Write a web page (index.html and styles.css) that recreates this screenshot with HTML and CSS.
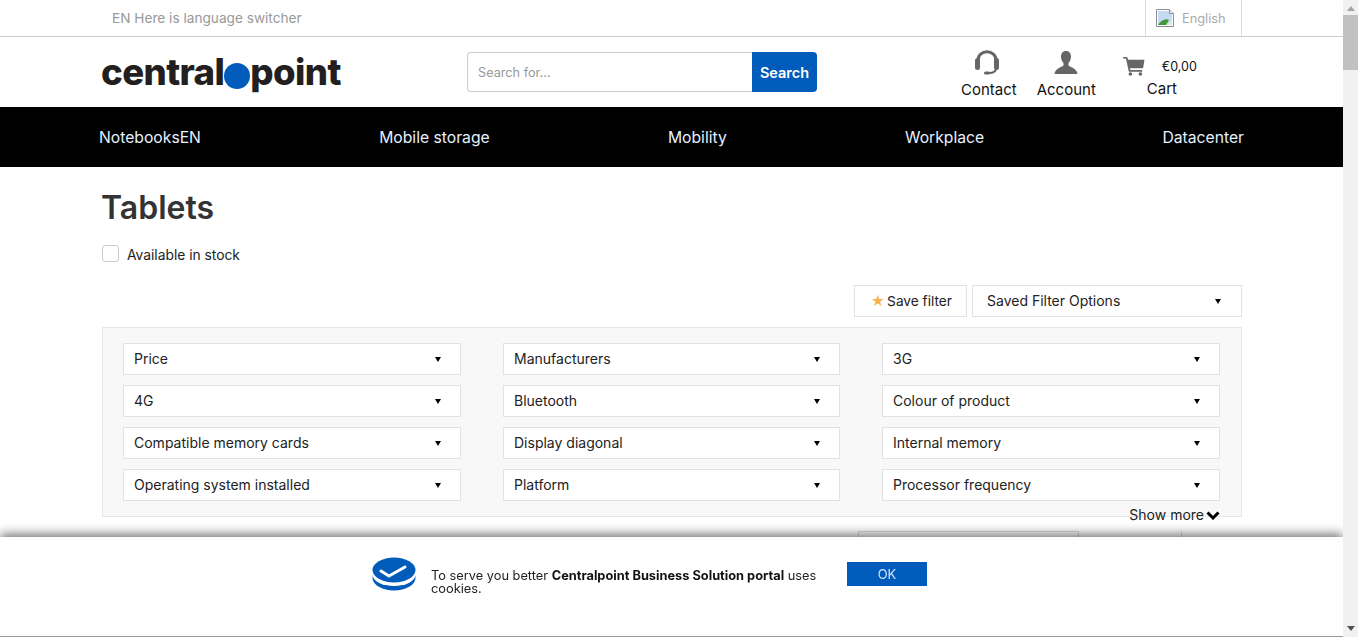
FILE: index.html
```html
<html>
<head>
<title>Tablets</title>
<link rel="stylesheet" href="styles.css">
</head>
<body>

<div class="page">
  <div class="topbar">
    <div class="wrap topbar-row">
      <span class="lang-note">EN Here is language switcher</span>
      <div class="lang-box">
        <svg class="broken" width="18" height="18" viewBox="0 0 18 18">
          <path d="M.5.5h13l4 4v13H.5z" fill="#fff" stroke="#8a8f96"/>
          <path d="M2 2h11v3h3v11H2z" fill="#c5d9f2"/>
          <path d="M2 16c3-5 8-7 11-5l-3 5z" fill="#3f9a3a"/>
          <path d="M11 16l3-4 2 1v3z" fill="#dce8d8"/>
          <path d="M13.5.5v4h4" fill="#eee" stroke="#8a8f96"/>
        </svg>
        <span>English</span>
      </div>
    </div>
  </div>

  <div class="wrap header">
    <div class="logo">central<i class="dot"></i>point</div>
    <div class="search">
      <input type="text" placeholder="Search for...">
      <button>Search</button>
    </div>
    <div class="tools">
      <div class="tool contact">
        <svg width="26" height="26" viewBox="0 0 26 26">
          <path d="M4 16V10C4 5 8 1.800 13 1.800S22 5 22 10V16" fill="none" stroke="#666" stroke-width="3"/>
          <rect x="1" y="8" width="5" height="12" rx="2.500" fill="#666"/>
          <rect x="20" y="8" width="5" height="12" rx="2.500" fill="#666"/>
          <path d="M22 18c0 4-3 5-7 5" fill="none" stroke="#666" stroke-width="2"/>
          <rect x="10" y="21.500" width="6" height="3" rx="1.500" fill="#666"/>
        </svg>
        <span>Contact</span>
      </div>
      <div class="tool account">
        <svg width="26" height="26" viewBox="0 0 26 26">
          <path d="M13 1c-3.500 0-5 2.700-5 5.500 0 2.500 1 5 2.500 6.500v2.500C8 17.500 2 18.500 1.500 24h23c-.5-5.500-6.500-6.500-9-8.500V13C17 11.500 18 9 18 6.500 18 3.700 16.500 1 13 1z" fill="#666"/>
        </svg>
        <span>Account</span>
      </div>
      <div class="tool cart">
        <div class="cart-top">
          <svg width="24" height="20" viewBox="0 0 24 22">
            <path d="M0 1h4.500l1 3H23.500l-1.500 9.500H7.500l.5 2H21v1.800H6.300L3.200 2.800H0z" fill="#666"/>
            <circle cx="8" cy="19.800" r="2" fill="#666"/>
            <circle cx="19" cy="19.800" r="2" fill="#666"/>
          </svg>
          <span class="price">€0,00</span>
        </div>
        <span class="cart-label">Cart</span>
      </div>
    </div>
  </div>

  <div class="nav">
    <div class="nav-row">
      <a>NotebooksEN</a>
      <a>Mobile storage</a>
      <a>Mobility</a>
      <a>Workplace</a>
      <a>Datacenter</a>
    </div>
  </div>

  <div class="wrap content">
    <h1>Tablets</h1>
    <label class="stock"><i class="check"></i>Available in stock</label>

    <div class="filter-actions">
      <div class="save-filter"><span class="star">★</span>Save filter</div>
      <div class="select saved">Saved Filter Options<i class="arrow"></i></div>
    </div>

    <div class="filters">
      <div class="select">Price<i class="arrow"></i></div>
      <div class="select">Manufacturers<i class="arrow"></i></div>
      <div class="select">3G<i class="arrow"></i></div>
      <div class="select">4G<i class="arrow"></i></div>
      <div class="select">Bluetooth<i class="arrow"></i></div>
      <div class="select">Colour of product<i class="arrow"></i></div>
      <div class="select">Compatible memory cards<i class="arrow"></i></div>
      <div class="select">Display diagonal<i class="arrow"></i></div>
      <div class="select">Internal memory<i class="arrow"></i></div>
      <div class="select">Operating system installed<i class="arrow"></i></div>
      <div class="select">Platform<i class="arrow"></i></div>
      <div class="select">Processor frequency<i class="arrow"></i></div>
      <div class="show-more">Show more
        <svg width="14" height="10" viewBox="0 0 14 10"><path d="M1.500 2.500L7 8l5.500-5.500" fill="none" stroke="#000" stroke-width="3"/></svg>
      </div>
    </div>

    <div class="sort-row">
      <div class="sort-a"></div>
      <div class="sort-b"></div>
    </div>
  </div>
</div>

<div class="cookie">
  <svg class="cookie-icon" width="44" height="34" viewBox="0 0 44 34">
    <ellipse cx="22" cy="21" rx="21.500" ry="12.500" fill="#005bbb"/>
    <ellipse cx="22" cy="17.500" rx="21.500" ry="11.500" fill="#fff"/>
    <ellipse cx="22" cy="13" rx="21.500" ry="12.500" fill="#005bbb"/>
    <path d="M9 14l8 5 16-9" fill="none" stroke="#fff" stroke-width="3" stroke-linecap="round" stroke-linejoin="round"/>
  </svg>
  <p>To serve you better <b>Centralpoint Business Solution portal</b> uses<br>cookies.</p>
  <button>OK</button>
</div>

<div class="scrollbar">
  <i class="up"></i>
  <div class="track"><div class="thumb"></div></div>
  <i class="down"></i>
</div>

</body>
</html>
```

FILE: styles.css
```css
html, body {
  margin: 0;
  height: 637px;
  overflow: hidden;
}

body {
  background: #fff;
  color: #222;
  font-family: Inter, "Liberation Sans", sans-serif;
  font-size: 14px;
}

.page {
  width: 1343px;
  height: 637px;
  overflow: hidden;
}

.wrap {
  width: 1140px;
  margin-left: 102px;
}

/* top bar */
.topbar {
  height: 36px;
  border-bottom: 1px solid #ccc;
}

.topbar-row {
  display: flex;
  justify-content: space-between;
  align-items: center;
  height: 36px;
}

.lang-note {
  margin: -1px 0 0 10px;
  color: #999;
  font-size: 13.65px;
}

.lang-box {
  display: flex;
  align-items: center;
  gap: 8px;
  width: 97px;
  height: 36px;
  padding-left: 10px;
  box-sizing: border-box;
  border: solid #ddd;
  border-width: 0 1px;
  color: #aaa;
  font-size: 12.8px;
}

/* header */
.header {
  display: flex;
  align-items: flex-start;
  height: 70px;
}

.logo {
  width: 365px;
  height: 70px;
  margin-left: -1px;
  padding-right: 1px;
  box-sizing: border-box;
  line-height: 70px;
  color: #231f20;
  font-size: 36.6px;
  font-weight: 800;
  letter-spacing: -.6px;
  white-space: nowrap;
}

.logo .dot {
  display: inline-block;
  width: 26px;
  height: 26px;
  border-radius: 50%;
  background: #005bbb;
  vertical-align: -4px;
}

.search {
  display: flex;
  width: 350px;
  height: 40px;
  margin-top: 15px;
  margin-left: 1px;
}

.search input {
  flex: 1;
  min-width: 0;
  padding: 0 10px;
  border: 1px solid #ccc;
  border-right: 0;
  border-radius: 4px 0 0 4px;
  font-family: inherit;
  font-size: 12.7px;
  outline: none;
}

.search input::placeholder {
  color: #999;
}

.search button {
  width: 65px;
  padding: 0;
  border: 0;
  border-radius: 0 4px 4px 0;
  background: #005bbb;
  color: #fff;
  font-family: inherit;
  font-size: 14.5px;
  font-weight: 600;
}

.tools {
  display: flex;
  margin-left: 144px;
  font-size: 15px;
  color: #111;
}

.tool {
  display: flex;
  flex-direction: column;
  align-items: center;
}

.contact, .account {
  gap: 4px;
  padding-top: 13px;
}

.contact svg {
  margin-right: 4px;
}

.account {
  margin-left: 20px;
}

.cart {
  margin-left: 26px;
  padding-top: 19px;
  align-items: flex-start;
}

.cart-top {
  display: flex;
  align-items: center;
  gap: 16px;
}

.price {
  font-size: 12.5px;
}

.cart-label {
  margin: 3px 0 0 25px;
}

/* nav */
.nav {
  height: 60px;
  background: #000;
}

.nav-row {
  display: flex;
  justify-content: space-between;
  align-items: center;
  width: 1145px;
  height: 60px;
  margin-left: 99px;
}

.nav-row a {
  color: #e6f2ff;
  font-size: 15.7px;
}

/* content */
h1 {
  margin: 0 0 0 -1px;
  padding-top: 21px;
  height: 45px;
  line-height: 40px;
  color: #333;
  font-size: 32px;
  font-weight: 600;
}

.stock {
  display: flex;
  align-items: center;
  height: 20px;
  margin-top: 11px;
  padding-top: 1px;
  color: #222;
  font-size: 13.8px;
}

.check {
  width: 15px;
  height: 15px;
  margin: -3px 8px 0 0;
  border: 1px solid #ccc;
  border-radius: 3px;
}

.filter-actions {
  display: flex;
  justify-content: flex-end;
  gap: 5px;
  margin-top: 20px;
}

.select, .save-filter {
  display: flex;
  align-items: center;
  height: 32px;
  box-sizing: border-box;
  padding-bottom: 2px;
  border: 1px solid #e2e2e2;
  background: #fff;
  color: #222;
}

.select {
  justify-content: space-between;
  padding-left: 10px;
  padding-right: 19px;
}

.select .arrow {
  margin-top: 2px;
}

.arrow {
  width: 0;
  height: 0;
  border: solid transparent;
  border-width: 5px 3.500px 0;
  border-top-color: #000;
}

.save-filter {
  gap: 2px;
  padding-left: 16px;
  padding-right: 14px;
  padding-bottom: 0;
  font-size: 13.7px;
}

.star {
  color: #f7b24d;
}

.saved {
  width: 270px;
  padding-left: 14px;
  padding-right: 20px;
}

.filters {
  position: relative;
  display: grid;
  grid-template-columns: 338px 337px 338px;
  justify-content: space-between;
  row-gap: 10px;
  margin-top: 10px;
  padding: 15px 21px 15px 20px;
  border: 1px solid #e6e6e6;
  background: #f8f8f8;
}

.show-more {
  position: absolute;
  right: 21px;
  bottom: -7px;
  display: flex;
  align-items: center;
  gap: 2px;
  color: #222;
}

.sort-row {
  display: flex;
  margin-top: 14px;
}

.sort-a {
  width: 221px;
  height: 40px;
  box-sizing: border-box;
  margin-left: 756px;
  border: 1px solid #ddd;
}

.sort-b {
  width: 60px;
  height: 40px;
  margin-left: 102px;
  border-left: 1px solid #ddd;
}

/* cookie bar */
.cookie {
  position: fixed;
  left: 0;
  bottom: 0;
  display: flex;
  justify-content: center;
  align-items: center;
  width: 1343px;
  height: 100px;
  box-sizing: border-box;
  padding: 0 44px 23px 0;
  border-bottom: 1px solid #999;
  background: #fff;
  box-shadow: 0 -3px 10px rgba(0, 0, 0, .55);
  color: #222;
  font-size: 12.8px;
  line-height: 13px;
}

.cookie-icon {
  margin: 0 15px 2px 0;
}

.cookie p {
  width: 400px;
  margin: 14px 16px 0 0;
}

.cookie b {
  color: #111;
  font-weight: 700;
}

.cookie button {
  width: 80px;
  height: 24px;
  margin-bottom: 3px;
  border: 0;
  background: #005bbb;
  color: #cfe2ff;
  font-family: inherit;
  font-size: 13px;
}

/* scrollbar, part of the picture */
.scrollbar {
  position: fixed;
  top: 0;
  right: 0;
  display: flex;
  flex-direction: column;
  width: 15px;
  height: 637px;
  background: #f1f1f1;
}

.track {
  flex: 1;
}

.thumb {
  height: 55px;
  background: #c1c1c1;
}

.up, .down {
  display: block;
  width: 0;
  height: 0;
  margin: 6px auto 4px;
  border: solid transparent;
  border-width: 0 4px 5px;
  border-bottom-color: #a3a3a3;
}

.down {
  margin: 4px auto 6px;
  border-width: 5px 4px 0;
  border-top-color: #505050;
  border-bottom-color: transparent;
}
```
